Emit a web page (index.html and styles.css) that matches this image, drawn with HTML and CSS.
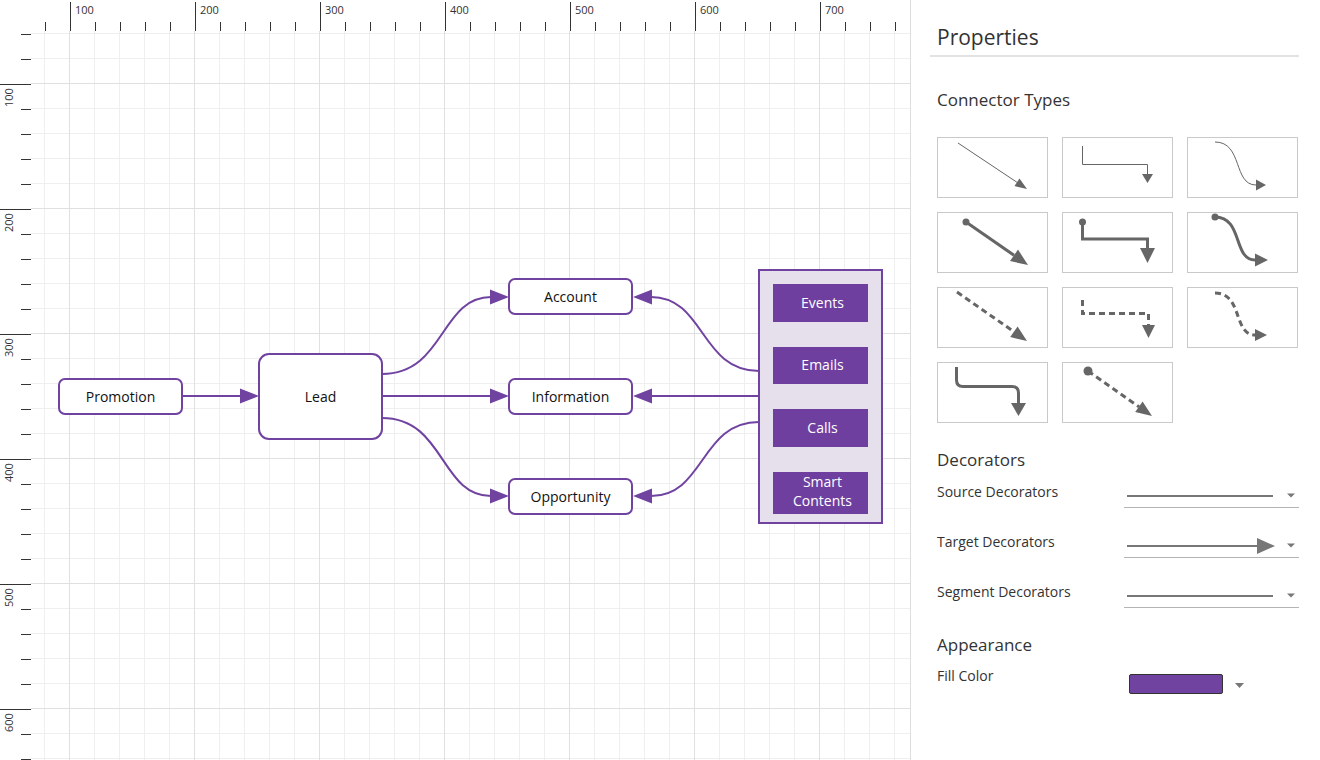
FILE: index.html
```html
<!DOCTYPE html>
<html lang="en">
<head>
  <meta charset="UTF-8" />
  <title>Connector Types</title>
  <link rel="stylesheet" href="styles.css">
</head>
<body>
  <div class="app">
    <div class="diagram">
      <div class="corner"></div>

      <svg class="ruler-h" width="879" height="31" viewBox="31 0 879 31">
        <defs>
          <pattern id="hTick" x="45" y="0" width="25" height="31" patternUnits="userSpaceOnUse">
            <line x1="0.5" y1="22" x2="0.5" y2="31" stroke="#333" />
          </pattern>
        </defs>
        <rect x="31" y="0" width="879" height="31" fill="url(#hTick)" />
        <g stroke="#333">
          <line x1="70.5" y1="2" x2="70.5" y2="31" />
          <line x1="195.5" y1="2" x2="195.5" y2="31" />
          <line x1="320.5" y1="2" x2="320.5" y2="31" />
          <line x1="445.5" y1="2" x2="445.5" y2="31" />
          <line x1="570.5" y1="2" x2="570.5" y2="31" />
          <line x1="695.5" y1="2" x2="695.5" y2="31" />
          <line x1="820.5" y1="2" x2="820.5" y2="31" />
        </g>
        <g class="ruler-label">
          <text x="75" y="14">100</text>
          <text x="200" y="14">200</text>
          <text x="325" y="14">300</text>
          <text x="450" y="14">400</text>
          <text x="575" y="14">500</text>
          <text x="700" y="14">600</text>
          <text x="825" y="14">700</text>
        </g>
      </svg>

      <svg class="ruler-v" width="31" height="729" viewBox="0 31 31 729">
        <defs>
          <pattern id="vTick" x="0" y="34" width="31" height="25" patternUnits="userSpaceOnUse">
            <line x1="21" y1="0.5" x2="31" y2="0.5" stroke="#333" />
          </pattern>
        </defs>
        <rect x="0" y="31" width="31" height="729" fill="url(#vTick)" />
        <g stroke="#333">
          <line x1="0" y1="84.5" x2="31" y2="84.5" />
          <line x1="0" y1="209.5" x2="31" y2="209.5" />
          <line x1="0" y1="334.5" x2="31" y2="334.5" />
          <line x1="0" y1="459.5" x2="31" y2="459.5" />
          <line x1="0" y1="584.5" x2="31" y2="584.5" />
          <line x1="0" y1="709.5" x2="31" y2="709.5" />
        </g>
        <g class="ruler-label">
          <text x="13" y="107" transform="rotate(-90 13 107)">100</text>
          <text x="13" y="232" transform="rotate(-90 13 232)">200</text>
          <text x="13" y="357" transform="rotate(-90 13 357)">300</text>
          <text x="13" y="482" transform="rotate(-90 13 482)">400</text>
          <text x="13" y="607" transform="rotate(-90 13 607)">500</text>
          <text x="13" y="732" transform="rotate(-90 13 732)">600</text>
        </g>
      </svg>

      <svg class="canvas" width="879" height="729" viewBox="31 31 879 729">
        <defs>
          <pattern id="minorGrid" x="44" y="33" width="25" height="25" patternUnits="userSpaceOnUse">
            <path d="M0.5 0 V25 M0 0.5 H25" stroke="#efefef" fill="none" />
          </pattern>
          <pattern id="majorGrid" x="69" y="83" width="125" height="125" patternUnits="userSpaceOnUse">
            <path d="M0.5 0 V125 M0 0.5 H125" stroke="#e0e0e0" fill="none" />
          </pattern>
        </defs>
        <rect x="31" y="31" width="879" height="729" fill="url(#minorGrid)" />
        <rect x="31" y="31" width="879" height="729" fill="url(#majorGrid)" />

        <!-- connectors -->
        <g class="link">
          <path d="M182 396 H241" />
          <path d="M382 374 C445 374 440 297 491 297" />
          <path d="M382 396 H491" />
          <path d="M382 418 C445 418 440 496 491 496" />
          <path d="M759 371 C700 371 705 297 651 297" />
          <path d="M759 396 H651" />
          <path d="M759 422 C700 422 705 496 651 496" />
        </g>
        <g class="arrow">
          <polygon points="240,388.5 259,396 240,403.5" />
          <polygon points="490,289.5 509,297 490,304.5" />
          <polygon points="490,388.5 509,396 490,403.5" />
          <polygon points="490,488.5 509,496 490,503.5" />
          <polygon points="652,289.5 633,297 652,304.5" />
          <polygon points="652,388.5 633,396 652,403.5" />
          <polygon points="652,488.5 633,496 652,503.5" />
        </g>

        <!-- nodes -->
        <g class="node">
          <rect x="59" y="379" width="123" height="35" rx="6" />
          <rect x="259" y="354" width="123" height="85" rx="10" />
          <rect x="509" y="279" width="123" height="35" rx="6" />
          <rect x="509" y="379" width="123" height="35" rx="6" />
          <rect x="509" y="479" width="123" height="35" rx="6" />
        </g>
        <g class="node-label">
          <text x="120.5" y="396">Promotion</text>
          <text x="320.5" y="396">Lead</text>
          <text x="570.5" y="296">Account</text>
          <text x="570.5" y="396">Information</text>
          <text x="570.5" y="496">Opportunity</text>
        </g>

        <rect class="group" x="759" y="270" width="123" height="253" />
        <g class="item">
          <rect x="773" y="284" width="95" height="38" />
          <rect x="773" y="347" width="95" height="37" />
          <rect x="773" y="409" width="95" height="38" />
          <rect x="773" y="472" width="95" height="42" />
        </g>
        <g class="item-label">
          <text x="822.5" y="302">Events</text>
          <text x="822.5" y="364">Emails</text>
          <text x="822.5" y="427">Calls</text>
          <text x="822.5" y="481">Smart</text>
          <text x="822.5" y="500">Contents</text>
        </g>
      </svg>
    </div>

    <aside class="panel">
      <h2 class="panel-title">Properties</h2>

      <h3 class="section-title">Connector Types</h3>
      <div class="types">
        <button class="type">
          <svg width="109" height="59" viewBox="0 0 109 59">
            <line x1="20" y1="5" x2="79" y2="44.3" class="thin" />
            <polygon points="76.5,48.1 89,51 81.5,40.6" />
          </svg>
        </button>
        <button class="type">
          <svg width="109" height="59" viewBox="0 0 109 59">
            <path d="M19.5 8 V26.5 H84.5 V37" class="thin" />
            <polygon points="79,36 90,36 84.5,45" />
          </svg>
        </button>
        <button class="type">
          <svg width="109" height="59" viewBox="0 0 109 59">
            <path d="M27 4 C55 4 45 47 68 47" class="thin" />
            <polygon points="68,41.5 78,47 68,52.5" />
          </svg>
        </button>

        <button class="type">
          <svg width="109" height="59" viewBox="0 0 109 59">
            <circle cx="28" cy="9" r="3.5" />
            <line x1="28" y1="9" x2="76" y2="42.3" class="thick" />
            <polygon points="72,48.1 90,52 80,36.6" />
          </svg>
        </button>
        <button class="type">
          <svg width="109" height="59" viewBox="0 0 109 59">
            <circle cx="19.5" cy="9" r="3.5" />
            <path d="M19.5 9 V26 H84.5 V36" class="thick" />
            <polygon points="77,35 92,35 84.5,50" />
          </svg>
        </button>
        <button class="type">
          <svg width="109" height="59" viewBox="0 0 109 59">
            <circle cx="27" cy="4" r="3.5" />
            <path d="M27 4 C55 4 45 47 67 47" class="thick" />
            <polygon points="67,40.5 80,47 67,53.5" />
          </svg>
        </button>

        <button class="type">
          <svg width="109" height="59" viewBox="0 0 109 59">
            <line x1="19" y1="4" x2="76" y2="43.8" class="dash" />
            <polygon points="72.2,49.1 89,53 79.6,38.5" />
          </svg>
        </button>
        <button class="type">
          <svg width="109" height="59" viewBox="0 0 109 59">
            <path d="M19.5 12 V25.5 H85.5 V37" class="dash" />
            <polygon points="79,37 92,37 85.5,50" />
          </svg>
        </button>
        <button class="type">
          <svg width="109" height="59" viewBox="0 0 109 59">
            <path d="M27 5 C55 5 45 47 67 47" class="dash" />
            <polygon points="67,41 79,47 67,53" />
          </svg>
        </button>

        <button class="type">
          <svg width="109" height="59" viewBox="0 0 109 59">
            <path d="M18.5 4 V17 Q18.5 23.5 25 23.5 H74 Q80.5 23.5 80.5 30 V40" class="thick" />
            <polygon points="73,40 88,40 80.5,53" />
          </svg>
        </button>
        <button class="type">
          <svg width="109" height="59" viewBox="0 0 109 59">
            <circle cx="25" cy="8" r="4.5" />
            <line x1="25" y1="8" x2="76" y2="43.8" class="dash" />
            <polygon points="72.2,49.1 89,53 79.6,38.5" />
          </svg>
        </button>
      </div>

      <h3 class="section-title decorators">Decorators</h3>
      <div class="prop-row first">
        <span class="prop-label">Source Decorators</span>
        <div class="dropdown">
          <svg width="175" height="25" viewBox="0 0 175 25">
            <line x1="3" y1="14" x2="149" y2="14" />
            <polygon points="163,11.5 171,11.5 167,15.5" />
          </svg>
        </div>
      </div>
      <div class="prop-row">
        <span class="prop-label">Target Decorators</span>
        <div class="dropdown">
          <svg width="175" height="25" viewBox="0 0 175 25">
            <line x1="3" y1="14" x2="134" y2="14" />
            <polygon points="133,6 133,22 151,14" />
            <polygon points="163,11.5 171,11.5 167,15.5" />
          </svg>
        </div>
      </div>
      <div class="prop-row">
        <span class="prop-label">Segment Decorators</span>
        <div class="dropdown">
          <svg width="175" height="25" viewBox="0 0 175 25">
            <line x1="3" y1="14" x2="149" y2="14" />
            <polygon points="163,11.5 171,11.5 167,15.5" />
          </svg>
        </div>
      </div>

      <h3 class="section-title appearance">Appearance</h3>
      <div class="prop-row fill-row">
        <span class="prop-label">Fill Color</span>
        <div class="swatch"></div>
        <svg class="caret" width="9" height="5" viewBox="0 0 9 5">
          <polygon points="0,0 9,0 4.5,5" />
        </svg>
      </div>
    </aside>
  </div>
</body>
</html>
```

FILE: styles.css
```css
body {
  margin: 0;
  font-family: "Open Sans", "Noto Sans", sans-serif;
  color: #333;
  background: #fff;
}

.app {
  display: flex;
  height: 760px;
  overflow: hidden;
}

/* diagram area */
.diagram {
  display: grid;
  grid-template-columns: 31px 879px;
  grid-template-rows: 31px 729px;
  border-right: 1px solid #dedede;
}

.diagram svg {
  display: block;
}

.ruler-label text {
  font-family: "Open Sans", sans-serif;
  font-size: 11px;
  fill: #333;
}

.canvas {
  background: #fff;
}

.link path {
  fill: none;
  stroke: #7043a1;
  stroke-width: 2;
}

.arrow polygon {
  fill: #7043a1;
}

.node rect {
  fill: #fff;
  stroke: #7043a1;
  stroke-width: 2;
}

.node-label text {
  font-family: "Open Sans", sans-serif;
  font-size: 14px;
  fill: #111;
  text-anchor: middle;
  dominant-baseline: central;
}

.group {
  fill: #e6e0ed;
  stroke: #7043a1;
  stroke-width: 2;
}

.item rect {
  fill: #6f3fa0;
}

.item-label text {
  font-family: "Open Sans", sans-serif;
  font-size: 14px;
  fill: #fff;
  text-anchor: middle;
  dominant-baseline: central;
}

/* properties panel */
.panel {
  width: 409px;
  box-sizing: border-box;
  padding: 0 21px 0 19px;
}

.panel-title {
  margin: 0;
  padding: 22px 7px 3px;
  font-size: 21px;
  font-weight: 400;
  line-height: 30px;
  border-bottom: 2px solid #e2e2e2;
}

.section-title {
  margin: 31px 0 0;
  padding-left: 7px;
  font-size: 17px;
  font-weight: 400;
  line-height: 24px;
}

.section-title.decorators {
  margin-top: 25px;
}

.section-title.appearance {
  margin-top: 25px;
}

.types {
  display: grid;
  grid-template-columns: repeat(3, 111px);
  grid-auto-rows: 61px;
  gap: 14px;
  margin: 25px 0 0 7px;
}

.type {
  padding: 0;
  border: 1px solid #c9c9c9;
  background: #fff;
  cursor: pointer;
}

.type svg {
  display: block;
}

.type .thin,
.type .thick,
.type .dash {
  fill: none;
  stroke: #666;
}

.type .thin {
  stroke-width: 1;
}

.type .thick {
  stroke-width: 3;
}

.type .dash {
  stroke-width: 3;
  stroke-dasharray: 6 4;
}

.type polygon,
.type circle {
  fill: #666;
}

.prop-row {
  display: flex;
  align-items: flex-start;
  margin: 24px 0 0 7px;
}

.prop-row.first {
  margin-top: 10px;
}

.prop-label {
  width: 187px;
  font-size: 14px;
  line-height: 20px;
}

.dropdown {
  width: 175px;
  height: 26px;
  box-sizing: border-box;
  border-bottom: 1px solid #b4b4b4;
}

.dropdown svg {
  display: block;
}

.dropdown line {
  stroke: #777;
  stroke-width: 2;
}

.dropdown polygon,
.caret polygon {
  fill: #777;
}

.fill-row {
  margin-top: 9px;
}

.swatch {
  width: 94px;
  height: 20px;
  margin: 8px 0 0 5px;
  box-sizing: border-box;
  background: #7043a1;
  border: 1px solid #333;
  border-radius: 2px;
}

.caret {
  display: block;
  margin: 17px 0 0 12px;
}
```
